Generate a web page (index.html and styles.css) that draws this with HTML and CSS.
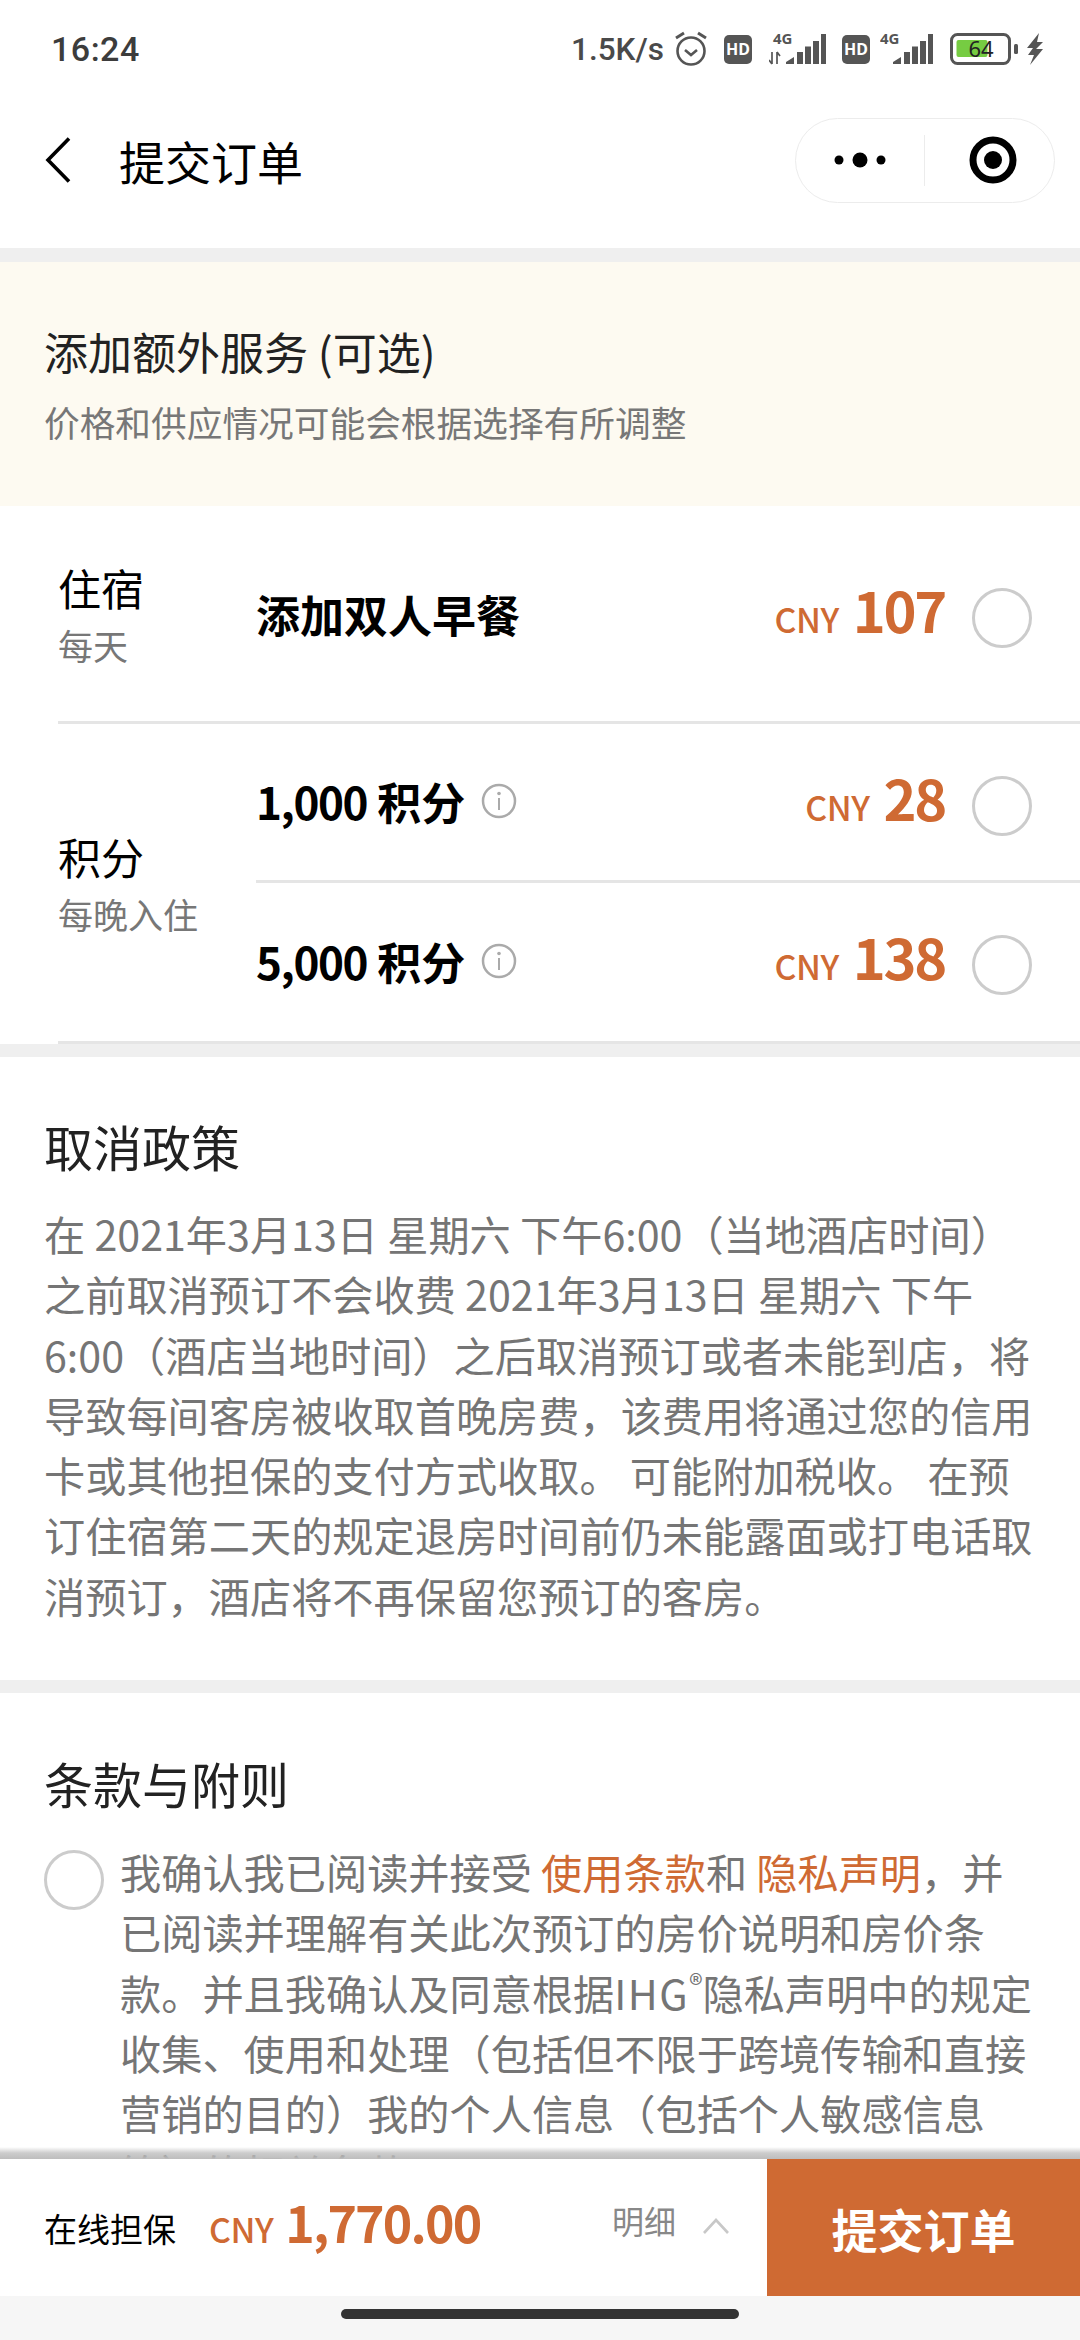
FILE: index.html
```html
<!DOCTYPE html>
<html lang="zh-CN">
<head>
    <meta charset="UTF-8">
    <meta name="viewport" content="width=device-width, initial-scale=1.0">
    <title>提交订单</title>
    <link rel="stylesheet" href="styles.css">
</head>
<body>

<div class="top">
    <div class="status">
        <span class="clock">16:24</span>
        <div class="status-right">
            <span class="speed">1.5K/s</span>
            <svg class="ic-alarm" width="34" height="36" viewBox="0 0 34 36">
                <circle cx="17" cy="20" r="13.5" fill="none" stroke="#555" stroke-width="2.6"/>
                <path d="M11 19l6 5 6-5" fill="none" stroke="#555" stroke-width="2.6"/>
                <path d="M2 7l8-5M32 7l-8-5" stroke="#555" stroke-width="3"/>
            </svg>
            <svg class="ic-hd" width="28" height="29" viewBox="0 0 28 29">
                <rect width="28" height="29" rx="5" fill="#555"/>
                <text x="14" y="20" text-anchor="middle" class="hd-text">HD</text>
            </svg>
            <svg class="ic-sig1" width="57" height="52" viewBox="0 -10 57 52">
                <text x="4" y="11" class="net-text">4G</text>
                <path d="M3 19v12M0 27l3 4M8 31V19M8 19l3 4" stroke="#555" stroke-width="1.7" fill="none"/>
                <path d="M17 31v-2l8-5v7zM28 31V19h6v12zM36 31V13.500h6V31zM44 31V8h6v23zM52 31V1h5v30z" fill="#555"/>
            </svg>
            <svg class="ic-hd ic-hd-last" width="28" height="29" viewBox="0 0 28 29">
                <rect width="28" height="29" rx="5" fill="#555"/>
                <text x="14" y="20" text-anchor="middle" class="hd-text">HD</text>
            </svg>
            <svg class="ic-sig2" width="53" height="52" viewBox="0 -10 53 52">
                <text x="0" y="11" class="net-text">4G</text>
                <path d="M13 31v-2l8-5v7zM24 31V19h6v12zM32 31V13.500h6V31zM40 31V8h6v23zM48 31V1h5v30z" fill="#555"/>
            </svg>
            <svg class="ic-batt" width="68" height="32" viewBox="0 0 68 32">
                <rect x="1.500" y="1.500" width="58" height="29" rx="6" fill="none" stroke="#555" stroke-width="3"/>
                <rect x="6.500" y="7" width="31" height="17" rx="2" fill="#76cc42"/>
                <text x="31" y="24" text-anchor="middle" class="batt-text">64</text>
                <rect x="64" y="11" width="4" height="10" rx="1.500" fill="#555"/>
            </svg>
            <svg class="ic-bolt" width="18" height="32" viewBox="0 0 18 32">
                <path d="M13 0L1 15h6L2 22h6L4 32l13-16h-7l7-7h-6z" fill="#555"/>
            </svg>
        </div>
    </div>
    <div class="nav">
        <svg class="back" width="26" height="46" viewBox="0 0 26 46">
            <path d="M24 1.500L3 23l21 21.500" fill="none" stroke="#000" stroke-width="3.600"/>
        </svg>
        <span class="nav-title">提交订单</span>
        <div class="capsule">
            <div class="capsule-half">
                <svg width="52" height="16" viewBox="0 0 52 16">
                    <circle cx="5" cy="8" r="4.500"/><circle cx="26" cy="8" r="7.500"/><circle cx="47" cy="8" r="4.500"/>
                </svg>
            </div>
            <div class="capsule-half capsule-target">
                <svg width="48" height="48" viewBox="0 0 48 48">
                    <circle cx="24" cy="24" r="20" fill="none" stroke="#000" stroke-width="7"/>
                    <circle cx="24" cy="24" r="9"/>
                </svg>
            </div>
        </div>
    </div>
</div>

<div class="content">
    <div class="notice">
        <div class="notice-title">添加额外服务 (可选)</div>
        <div class="notice-sub">价格和供应情况可能会根据选择有所调整</div>
    </div>

    <div class="extras">
        <div class="group group-stay">
            <div class="group-label">
                <div class="label-main">住宿</div>
                <div class="label-sub">每天</div>
            </div>
            <div class="options">
                <div class="option">
                    <span class="option-name">添加双人早餐</span>
                    <span class="price"><span class="cny">CNY</span><span class="amount">107</span></span>
                    <span class="radio"></span>
                </div>
            </div>
        </div>
        <div class="group group-points">
            <div class="group-label">
                <div class="label-main">积分</div>
                <div class="label-sub">每晚入住</div>
            </div>
            <div class="options">
                <div class="option option-line">
                    <span class="option-name"><span class="pts-num">1,000</span> 积分</span>
                    <svg class="info" width="36" height="36" viewBox="0 0 36 36">
                        <circle cx="18" cy="18" r="16" fill="none" stroke="#aaa" stroke-width="2.500"/>
                        <circle cx="18" cy="10.500" r="1.800" fill="#aaa"/>
                        <path d="M18 15v12" stroke="#aaa" stroke-width="2"/>
                    </svg>
                    <span class="price"><span class="cny">CNY</span><span class="amount">28</span></span>
                    <span class="radio"></span>
                </div>
                <div class="option option-last">
                    <span class="option-name"><span class="pts-num">5,000</span> 积分</span>
                    <svg class="info" width="36" height="36" viewBox="0 0 36 36">
                        <circle cx="18" cy="18" r="16" fill="none" stroke="#aaa" stroke-width="2.500"/>
                        <circle cx="18" cy="10.500" r="1.800" fill="#aaa"/>
                        <path d="M18 15v12" stroke="#aaa" stroke-width="2"/>
                    </svg>
                    <span class="price"><span class="cny">CNY</span><span class="amount">138</span></span>
                    <span class="radio"></span>
                </div>
            </div>
        </div>
    </div>

    <div class="section section-policy">
        <h2 class="section-title">取消政策</h2>
        <p class="body-text">在 2021年3月13日 星期六 下午6:00（当地酒店时间）之前取消预订不会收费 2021年3月13日 星期六 下午6:00（酒店当地时间）之后取消预订或者未能到店，将导致每间客房被收取首晚房费，该费用将通过您的信用卡或其他担保的支付方式收取。 可能附加税收。 在预订住宿第二天的规定退房时间前仍未能露面或打电话取消预订，酒店将不再保留您预订的客房。</p>
    </div>

    <div class="section section-terms">
        <h2 class="section-title">条款与附则</h2>
        <div class="terms-row">
            <span class="radio radio-terms"></span>
            <p class="body-text">我确认我已阅读并接受 <a class="link">使用条款</a>和 <a class="link">隐私声明</a>，并已阅读并理解有关此次预订的房价说明和房价条款。并且我确认及同意根据<span class="ihg">IHG</span><sup class="reg">®</sup>隐私声明中的规定收集、使用和处理（包括但不限于跨境传输和直接营销的目的）我的个人信息（包括个人敏感信息等）的相关条款。</p>
        </div>
    </div>
</div>

<div class="bottom">
    <div class="bottom-info">
        <span class="guarantee">在线担保</span>
        <span class="total"><span class="cny">CNY</span><span class="total-amount">1,770.00</span></span>
        <span class="detail">明细</span>
        <svg class="detail-arrow" width="28" height="16" viewBox="0 0 28 16">
            <path d="M2 15L14 2l12 13" fill="none" stroke="#c8c8c8" stroke-width="2.600"/>
        </svg>
    </div>
    <div class="submit">提交订单</div>
</div>

<div class="home-strip"><span class="home-pill"></span></div>

</body>
</html>
```

FILE: styles.css
```css
* {
    box-sizing: border-box;
}

html, body {
    margin: 0;
    padding: 0;
}

body {
    width: 1080px;
    height: 2340px;
    overflow: hidden;
    display: flex;
    flex-direction: column;
    background-color: #fff;
    font-family: "Noto Sans CJK SC", "Noto Sans", sans-serif;
    color: #000;
}

/* status bar + nav */
.top {
    flex: none;
    height: 248px;
    background-color: #fff;
}

.status {
    height: 72px;
    padding: 26px 36px 0 51px;
    display: flex;
    align-items: center;
    justify-content: space-between;
}

.clock {
    font-family: Roboto, sans-serif;
    font-weight: 500;
    font-size: 34px;
    color: #3c3c3c;
    letter-spacing: 0.5px;
}

.status-right {
    display: flex;
    align-items: center;
}

.speed {
    font-family: Roboto, sans-serif;
    font-weight: 500;
    font-size: 31.500px;
    color: #4a4a4a;
    margin-right: 10px;
}

.ic-alarm { margin-right: 16px; }
.ic-hd { margin-right: 17px; }
.ic-hd-last { margin-right: 10px; }
.ic-sig1 { margin-right: 16px; }
.ic-sig2 { margin-right: 17px; }
.ic-batt { margin-right: 8px; }

.hd-text {
    font-family: "Noto Sans", sans-serif;
    font-weight: 700;
    font-size: 16px;
    fill: #fff;
}

.net-text {
    font-family: "Noto Sans", sans-serif;
    font-weight: 700;
    font-size: 15px;
    fill: #555;
}

.batt-text {
    font-family: "Noto Sans", sans-serif;
    font-size: 22px;
    fill: #222;
}

.nav {
    height: 176px;
    padding: 0 25px 0 45px;
    display: flex;
    align-items: center;
}

.back {
    margin-right: 48px;
}

.nav-title {
    font-size: 46px;
    flex: 1;
}

.capsule {
    width: 260px;
    height: 85px;
    border: 1px solid #ececec;
    border-radius: 43px;
    display: flex;
    align-items: center;
}

.capsule-half {
    width: 50%;
    height: 51px;
    display: flex;
    align-items: center;
    justify-content: center;
}

.capsule-half:first-child {
    border-right: 1px solid #ececec;
}

.capsule-target {
    padding-left: 6px;
}

/* scrolling page, clipped by the bottom bar */
.content {
    flex: 1;
    min-height: 0;
    overflow: hidden;
    background-color: #efefef;
    padding-top: 14px;
}

.notice {
    height: 244px;
    padding: 61px 44px 0;
    background-color: #fdfaf1;
}

.notice-title {
    font-size: 44px;
    line-height: 56px;
    color: #222;
}

.notice-sub {
    font-size: 35.700px;
    line-height: 50px;
    margin-top: 18px;
    color: #777;
}

.extras {
    height: 538px;
    background-color: #fff;
    padding-left: 58px;
}

.group {
    display: flex;
    align-items: center;
    border-bottom: 3px solid #e5e5e5;
}

.group-stay { height: 218px; }
.group-points { height: 320px; }

.group-label {
    width: 198px;
    flex: none;
}

.label-main {
    font-size: 43px;
    line-height: 56px;
}

.label-sub {
    font-size: 35px;
    line-height: 48px;
    margin-top: 6px;
    color: #777;
}

.options {
    flex: 1;
}

.option {
    height: 160px;
    padding-right: 48px;
    display: flex;
    align-items: center;
}

.option-line {
    border-bottom: 3px solid #e5e5e5;
}

.option-last {
    padding-bottom: 4px;
}

.option-name {
    font-size: 44px;
    font-weight: 700;
}

.pts-num {
    letter-spacing: -1.400px;
}

.info {
    margin-left: 16px;
}

.price {
    margin-left: auto;
    margin-right: 27px;
    margin-bottom: 10px;
    display: flex;
    align-items: baseline;
    color: #cf6a33;
}

.cny {
    font-size: 34px;
    font-weight: 500;
    letter-spacing: -0.500px;
}

.amount {
    font-size: 56px;
    font-weight: 700;
    letter-spacing: -2.300px;
    margin-left: 14px;
}

.radio {
    flex: none;
    width: 60px;
    height: 60px;
    border: 3px solid #ccc;
    border-radius: 50%;
    background-color: #fff;
}

.option .radio {
    margin-top: 9px;
}

.section {
    background-color: #fff;
    padding: 0 44px;
}

.section-policy {
    margin-top: 13px;
    height: 623px;
    padding-top: 57px;
}

.section-terms {
    margin-top: 13px;
    padding-top: 58px;
}

.section-title {
    margin: 0;
    font-size: 49px;
    font-weight: 400;
    line-height: 64px;
    color: #222;
}

.body-text {
    margin: 25px 0 0;
    font-size: 41.200px;
    line-height: 60.300px;
    color: #757575;
}

.terms-row {
    display: flex;
    align-items: flex-start;
}

.terms-row .body-text {
    margin-top: 26px;
}

.radio-terms {
    margin-top: 35px;
    margin-right: 16px;
}

.link {
    color: #cf6a33;
}

.ihg {
    letter-spacing: 1.500px;
}

.reg {
    font-size: 28px;
    line-height: 0;
}

/* bottom bar */
.bottom {
    flex: none;
    height: 137px;
    display: flex;
    position: relative;
    background-color: #fff;
}

/* shadow over the page text */
.bottom::before {
    content: "";
    position: absolute;
    left: 0;
    right: 0;
    top: -12px;
    height: 12px;
    background: linear-gradient(rgba(120, 120, 120, 0), rgba(170, 170, 170, 0.6) 50%, #bdbdbd);
}

.bottom-info {
    width: 767px;
    padding-left: 44px;
    display: flex;
    align-items: center;
}

.guarantee {
    font-size: 33px;
    width: 165px;
}

.total {
    display: flex;
    align-items: baseline;
    color: #cf6a33;
    width: 403px;
    margin-bottom: 14px;
}

.total-amount {
    font-size: 50px;
    font-weight: 700;
    letter-spacing: -1.800px;
    margin-left: 12px;
}

.detail {
    font-size: 32px;
    color: #888;
    margin-bottom: 16px;
    width: 90px;
}

.detail-arrow {
    margin-bottom: 4px;
}

.submit {
    flex: 1;
    display: flex;
    align-items: center;
    justify-content: center;
    background-color: #cf6a33;
    color: #fff;
    font-size: 46px;
    font-weight: 700;
}

.home-strip {
    flex: none;
    height: 44px;
    padding-top: 13px;
    background-color: #f6f6f6;
    display: flex;
    justify-content: center;
}

.home-pill {
    width: 398px;
    height: 10px;
    border-radius: 5px;
    background-color: #333;
}
```
